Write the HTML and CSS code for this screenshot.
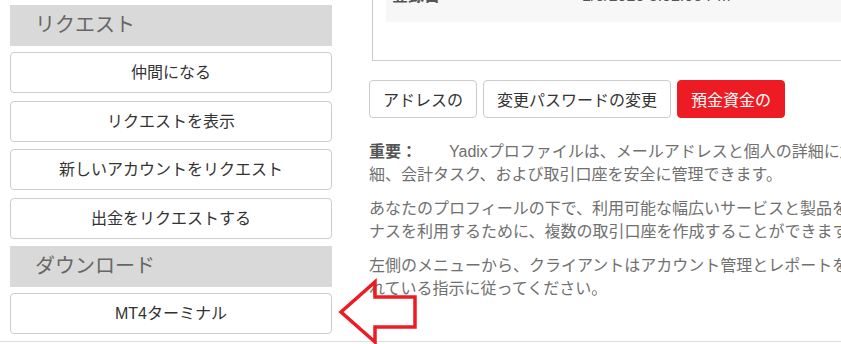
FILE: index.html
```html
<!DOCTYPE html>
<html lang="ja">

<head>
    <meta charset="UTF-8">
    <meta name="viewport" content="width=device-width, initial-scale=1.0">
    <title>プロファイル</title>
    <link rel="stylesheet" href="styles.css">
</head>

<body>
    <div class="page">
        <div class="sidebar">
            <div class="side-title">リクエスト</div>
            <a class="side-btn" href="#">仲間になる</a>
            <a class="side-btn" href="#">リクエストを表示</a>
            <a class="side-btn" href="#">新しいアカウントをリクエスト</a>
            <a class="side-btn" href="#">出金をリクエストする</a>
            <div class="side-title">ダウンロード</div>
            <a class="side-btn" href="#">MT4ターミナル</a>
        </div>
        <div class="main">
            <div class="panel">
                <div class="info-row">
                    <span class="info-label">登録日</span>
                    <span class="info-value">1/8/2020 8:02:08 PM</span>
                </div>
            </div>
            <div class="actions">
                <button type="button" class="btn">アドレスの</button>
                <button type="button" class="btn">変更パスワードの変更</button>
                <button type="button" class="btn btn-red">預金資金の</button>
            </div>
            <p class="note"><b>重要：</b>　　Yadixプロファイルは、メールアドレスと個人の詳細に加えて、アカウントの詳<br>細、会計タスク、および取引口座を安全に管理できます。</p>
            <p class="note">あなたのプロフィールの下で、利用可能な幅広いサービスと製品をご覧いただけます。ボー<br>ナスを利用するために、複数の取引口座を作成することができます。</p>
            <p class="note">左側のメニューから、クライアントはアカウント管理とレポートを閲覧し、画面に表示さ<br>れている指示に従ってください。</p>
        </div>
        <svg class="arrow" width="84" height="68" viewBox="0 0 84 68">
            <polygon points="5,34 39,4 39,19 79,19 79,49 39,49 39,64" fill="none" stroke="#ed1c24" stroke-width="3.5" />
        </svg>
    </div>
</body>

</html>
```

FILE: styles.css
```css
body {
    font-family: "Liberation Sans", "Noto Sans CJK JP", sans-serif;
    margin: 0;
    padding: 0;
    background-color: #fff;
    overflow: hidden;
    width: 841px;
    height: 344px;
}

.page {
    position: relative;
    display: flex;
    padding: 0 0 7px 10px;
    border-bottom: 1px solid #dcdcdc;
}

.sidebar {
    width: 322px;
    flex-shrink: 0;
    padding-top: 5px;
    display: flex;
    flex-direction: column;
}

.side-title {
    height: 41px;
    line-height: 41px;
    padding-left: 25px;
    font-size: 20px;
    color: #666;
    background-color: #d9d9d9;
    margin-bottom: 6px;
}

.side-btn {
    display: block;
    box-sizing: border-box;
    height: 41px;
    line-height: 39px;
    text-align: center;
    font-size: 16px;
    color: #333;
    text-decoration: none;
    background-color: #fff;
    border: 1px solid #ccc;
    border-radius: 4px;
    margin-bottom: 7.5px;
}

.side-btn:last-child {
    margin-bottom: 0;
}

.main {
    margin-left: 37px;
    min-width: 0;
    flex: 1;
}

.panel {
    margin: -20px -20px 0 3px;
    padding: 0 0 38px 13px;
    border: 1px solid #ccc;
    border-top: none;
}

.info-row {
    display: flex;
    background-color: #f7f7f7;
    padding: 5px 0 15px 6px;
    line-height: 22px;
    font-size: 16px;
    color: #555;
    white-space: nowrap;
}

.info-label {
    font-weight: bold;
    width: 190px;
}

.actions {
    display: flex;
    gap: 6px;
    margin-top: 19px;
}

.btn {
    font-family: inherit;
    height: 38px;
    padding: 0 13px;
    font-size: 16px;
    color: #333;
    background-color: #fff;
    border: 1px solid #ccc;
    border-radius: 4px;
    cursor: pointer;
}

.btn-red {
    background-color: #ed1c24;
    border-color: #ed1c24;
    color: #fff;
}

.note {
    margin: 0 0 11px;
    font-size: 16px;
    line-height: 23px;
    color: #707070;
    white-space: nowrap;
}

.note:first-of-type {
    margin-top: 22px;
}

.note b {
    color: #555;
}

.arrow {
    position: absolute;
    left: 336px;
    top: 278px;
}
```
